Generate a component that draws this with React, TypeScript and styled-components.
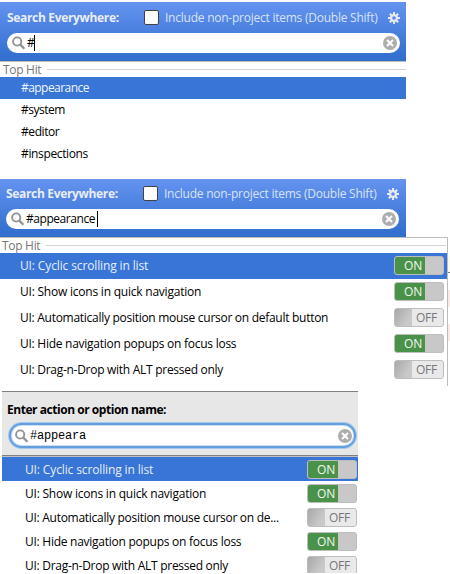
import React from 'react';
import styled, { createGlobalStyle } from 'styled-components';

const GlobalStyle = createGlobalStyle`
  * { box-sizing: border-box; }
  body {
    margin: 0;
    background: #fff;
    font: 12px/16px 'Open Sans', 'Noto Sans', sans-serif;
    color: #000;
    overflow: hidden;
  }
`;

const Page = styled.main`
  width: 450px;
  height: 573px;
  padding-top: 2px;
  overflow: hidden;
`;

const Label = styled.span<{ $spacing?: number }>`
  white-space: pre;
  letter-spacing: ${(p) => p.$spacing ?? 0}px;
`;

const SearchPopup = styled.section<{ $height: number }>`
  height: ${(p) => p.$height}px;
`;

const Header = styled.header<{ $shift?: number; $height: number }>`
  width: 406px;
  height: ${(p) => p.$height}px;
  padding: ${(p) => (p.$shift ? '6px 7px 0 6px' : '7px 6px 0 7px')};
  background: linear-gradient(#6593f0, #2f6dcd);
`;

const HeaderBar = styled.div`
  display: flex;
  align-items: center;
  height: 17px;
  color: #e9edf5;
`;

const Title = styled(Label)`
  width: 137px;
  font-weight: 700;
`;

const Checkbox = styled.span`
  width: 15px;
  height: 15px;
  margin-right: 6px;
  border: 1px solid #424242;
  border-radius: 2px;
  background: #fff;
`;

const IncludeLabel = styled(Label)`
  width: 223px;
  color: #d8e2f4;
`;

const Field = styled.div`
  display: flex;
  align-items: center;
  width: 393px;
  height: 20px;
  margin-top: 7px;
  padding: 0 3px 0 5px;
  border-radius: 10px;
  background: #fff;
`;

const Query = styled(Label)`
  margin-left: 1px;
`;

const Caret = styled.span<{ $gap?: number }>`
  width: 1px;
  height: 16px;
  margin-left: ${(p) => p.$gap ?? 0}px;
  background: #000;
`;

const ClearSlot = styled.span`
  display: flex;
  margin-left: auto;
`;

const Group = styled.div<{ $shift?: number }>`
  display: flex;
  align-items: center;
  height: 15px;
  padding-left: ${(p) => (p.$shift ? 2 : 3)}px;
  padding-right: ${(p) => (p.$shift ? 1 : 0)}px;
  color: #777;
`;

const Rule = styled.span`
  flex: 1;
  height: 1px;
  margin-left: 6px;
  background: #d4d4d4;
`;

const HitList = styled.div`
  width: 406px;
  border-top: 1px solid #bcbcbc;
`;

const Hit = styled.div<{ $selected?: boolean }>`
  display: flex;
  align-items: center;
  height: 22px;
  padding-left: 21px;
  background: ${(p) => (p.$selected ? '#3875d7' : '#fff')};
  color: ${(p) => (p.$selected ? '#f1f4fb' : '#000')};
`;

const OptionArea = styled.div`
  display: flex;
  width: 450px;
`;

const OptionPopup = styled.div`
  width: 448px;
  height: 149px;
  border-top: 1px solid #bcbcbc;
  border-right: 1px solid #bcbcbc;
`;

const EditorEdge = styled.div`
  flex: 1;
  padding-top: 19px;
`;

const Stripe = styled.div<{ $height: number; $color: string; $gap?: number }>`
  height: ${(p) => p.$height}px;
  margin-bottom: ${(p) => p.$gap ?? 0}px;
  background: ${(p) => p.$color};
`;

const Option = styled.div<{ $selected?: boolean; $compact?: boolean }>`
  display: flex;
  align-items: flex-start;
  justify-content: space-between;
  height: ${(p) => (p.$compact ? 24 : 26)}px;
  padding: 3px ${(p) => (p.$compact ? 1 : 3)}px 0 ${(p) => (p.$compact ? 23 : 20)}px;
  line-height: 20px;
  background: ${(p) => (p.$selected ? '#3875d7' : '#fff')};
  color: ${(p) => (p.$selected ? '#e7edf8' : '#000')};
`;

const Switch = styled.span<{ $on: boolean }>`
  display: flex;
  justify-content: ${(p) => (p.$on ? 'flex-start' : 'flex-end')};
  width: 50px;
  height: 19px;
  border: 1px solid #bdbdbd;
  border-radius: 3px;
  overflow: hidden;
  font-size: 12px;
  line-height: 17px;
  letter-spacing: -0.2px;
  text-align: center;
  color: ${(p) => (p.$on ? '#f2f7f2' : '#777')};
  background: ${(p) => (p.$on ? '#c8c8c8' : 'linear-gradient(120deg, #a8a8a8, #c9c9c9 17px)')};
`;

const SwitchFace = styled.span<{ $on: boolean }>`
  width: ${(p) => (p.$on ? 30 : 31)}px;
  padding-left: ${(p) => (p.$on ? 6 : 0)}px;
  padding-right: ${(p) => (p.$on ? 0 : 2)}px;
  background: ${(p) => (p.$on ? '#4a9249' : '#e9e9e9')};
`;

const ActionDialog = styled.section`
  width: 356px;
  margin: 5px 0 0 2px;
  border-top: 1px solid #808080;
`;

const ActionHeader = styled.header`
  height: 65px;
  padding: 10px 1px 0 5px;
  border-bottom: 1px solid #c2c2c2;
  box-shadow: inset 0 -1px #808080;
  background: #e7e7e7;
`;

const ActionTitle = styled(Label)`
  display: block;
  font-weight: 700;
`;

const ActionField = styled.div`
  display: flex;
  align-items: center;
  width: 347px;
  height: 25px;
  margin: 5px 0 0 2px;
  padding: 0 2px 0 4px;
  border: 2px solid #639fde;
  border-radius: 13px;
  box-shadow: 0 0 0 1px #a6c8ea, inset 0 0 0 1px #cbdff4;
  background: #fff;
`;

const MonoQuery = styled(Label)`
  margin: 1px 0 0 1px;
  font-family: 'Liberation Mono', monospace;
`;

const SearchIcon = () => (
  <svg width="14" height="14" viewBox="0 0 14 14" fill="none" stroke="#929292">
    <circle cx="5.2" cy="5.5" r="4.1" strokeWidth="1.9" />
    <path d="M8.3 8.6 12.4 12.7" strokeWidth="2.3" />
  </svg>
);

const ClearIcon = () => (
  <svg width="14" height="14" viewBox="0 0 14 14">
    <circle cx="7" cy="7" r="7" fill="#adadad" />
    <path d="m4 4 6 6m0-6-6 6" stroke="#fff" strokeWidth="2" />
  </svg>
);

const GearIcon = () => (
  <svg width="12" height="12" viewBox="0 0 12 12" fill="none" stroke="#e5e8ee">
    <path d="M6 0v3M6 9v3M0 6h3M9 6h3M1.8 1.8l2 2M8.2 8.2l2 2M1.8 10.2l2-2M8.2 3.8l2-2" strokeWidth="2" />
    <circle cx="6" cy="6" r="2.9" strokeWidth="2.2" />
  </svg>
);

interface Item {
  text: string;
  spacing: number;
  on?: boolean;
}

const hits: Item[] = [
  { text: '#appearance', spacing: -0.55 },
  { text: '#system', spacing: -0.5 },
  { text: '#editor', spacing: -0.43 },
  { text: '#inspections', spacing: -0.36 },
];

const options: Item[] = [
  { text: 'UI: Cyclic scrolling in list', spacing: -0.13, on: true },
  { text: 'UI: Show icons in quick navigation', spacing: -0.22, on: true },
  { text: 'UI: Automatically position mouse cursor on default button', spacing: -0.28, on: false },
  { text: 'UI: Hide navigation popups on focus loss', spacing: -0.26, on: true },
  { text: 'UI: Drag-n-Drop with ALT pressed only', spacing: -0.28, on: false },
];

const shortOptions = options.map((o, i) =>
  i === 2 ? { ...o, text: 'UI: Automatically position mouse cursor on de...' } : o,
);

const SearchHeader = ({ query, shift, gap }: { query: string; shift?: number; gap?: number }) => (
  <Header $shift={shift} $height={shift ? 58 : 59}>
    <HeaderBar>
      <Title $spacing={-0.33}>Search Everywhere:</Title>
      <Checkbox />
      <IncludeLabel $spacing={-0.24}>Include non-project items (Double Shift)</IncludeLabel>
      <GearIcon />
    </HeaderBar>
    <Field>
      <SearchIcon />
      <Query $spacing={-0.45}>{query}</Query>
      <Caret $gap={gap} />
      <ClearSlot><ClearIcon /></ClearSlot>
    </Field>
  </Header>
);

const TopHit = ({ shift }: { shift?: number }) => (
  <Group $shift={shift}>
    <Label $spacing={-0.3}>Top Hit</Label>
    <Rule />
  </Group>
);

const OptionRows = ({ items, compact }: { items: Item[]; compact?: boolean }) => (
  <>
    {items.map((o, i) => (
      <Option key={o.text} $selected={i === 0} $compact={compact}>
        <Label $spacing={o.spacing}>{o.text}</Label>
        <Switch $on={!!o.on}>
          <SwitchFace $on={!!o.on}>{o.on ? 'ON' : 'OFF'}</SwitchFace>
        </Switch>
      </Option>
    ))}
  </>
);

export default function App() {
  return (
    <Page>
      <GlobalStyle />
      <SearchPopup $height={177}>
        <SearchHeader query="#" />
        <HitList>
          <TopHit />
          {hits.map((h, i) => (
            <Hit key={h.text} $selected={i === 0}>
              <Label $spacing={h.spacing}>{h.text}</Label>
            </Hit>
          ))}
        </HitList>
      </SearchPopup>
      <SearchPopup $height={207}>
        <SearchHeader query="#appearance" shift={1} gap={2} />
        <OptionArea>
          <OptionPopup>
            <TopHit shift={1} />
            <OptionRows items={options} />
          </OptionPopup>
          <EditorEdge>
            <Stripe $height={16} $color="#fffae3" />
            <Stripe $height={1} $color="#777" $gap={17} />
            <Stripe $height={17} $color="#fbe9e6" $gap={17} />
            <Stripe $height={17} $color="#fbe9e6" />
          </EditorEdge>
        </OptionArea>
      </SearchPopup>
      <ActionDialog>
        <ActionHeader>
          <ActionTitle $spacing={-0.46}>Enter action or option name:</ActionTitle>
          <ActionField>
            <SearchIcon />
            <MonoQuery $spacing={-0.2}>#appeara</MonoQuery>
            <ClearSlot><ClearIcon /></ClearSlot>
          </ActionField>
        </ActionHeader>
        <OptionRows items={shortOptions} compact />
      </ActionDialog>
    </Page>
  );
}
